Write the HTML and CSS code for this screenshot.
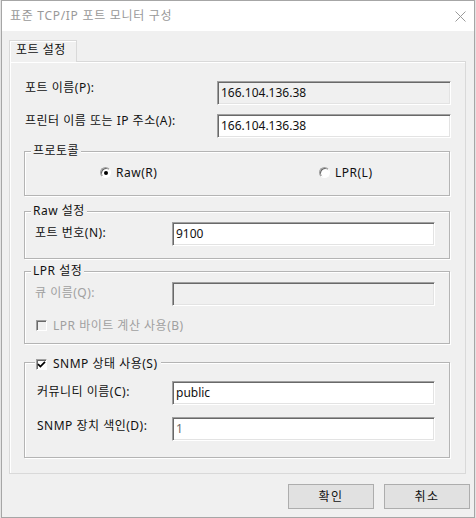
FILE: index.html
```html
<!DOCTYPE html>
<html lang="ko">
<head>
<meta charset="utf-8">
<title>표준 TCP/IP 포트 모니터 구성</title>
<link rel="stylesheet" href="styles.css">
</head>
<body>
<div class="window">
  <div class="titlebar">
    <span class="title">표준 TCP/IP 포트 모니터 구성</span>
    <svg class="close" width="11" height="11" viewBox="0 0 11 11"><path d="M0.5 0.5 L10.5 10.5 M10.5 0.5 L0.5 10.5" stroke="#9a9a9a" stroke-width="1" fill="none"/></svg>
  </div>
  <div class="body">
    <div class="tabs"><div class="tab">포트 설정</div></div>
    <div class="panel">
      <div class="row top">
        <span class="label">포트 이름(P):</span>
        <div class="input disabled wide">166.104.136.38</div>
      </div>
      <div class="row top r2">
        <span class="label">프린터 이름 또는 IP 주소(A):</span>
        <div class="input wide">166.104.136.38</div>
      </div>

      <div class="group g-proto">
        <span class="legend">프로토콜</span>
        <div class="radios">
          <span class="radio-item raw"><span class="radio checked"></span>Raw(R)</span>
          <span class="radio-item"><span class="radio"></span>LPR(L)</span>
        </div>
      </div>

      <div class="group g-raw">
        <span class="legend">Raw 설정</span>
        <div class="grow">
          <span class="glabel up3">포트 번호(N):</span>
          <div class="input">9100</div>
        </div>
      </div>

      <div class="group g-lpr">
        <span class="legend">LPR 설정</span>
        <div class="grow">
          <span class="glabel dim up3">큐 이름(Q):</span>
          <div class="input disabled"></div>
        </div>
        <div class="checkrow dim">
          <span class="check disabled"></span>LPR 바이트 계산 사용(B)
        </div>
      </div>

      <div class="group g-snmp">
        <span class="legend legend-check">
          <span class="check"><svg width="9" height="9" viewBox="0 0 9 9"><path d="M1 4.2 L3.4 6.6 L8 1.8" stroke="#000" stroke-width="1.7" fill="none"/></svg></span>SNMP 상태 사용(S)
        </span>
        <div class="grow g2">
          <span class="glabel up3">커뮤니티 이름(C):</span>
          <div class="input">public</div>
        </div>
        <div class="grow g2 r-gap">
          <span class="glabel up6">SNMP 장치 색인(D):</span>
          <div class="input grey">1</div>
        </div>
      </div>
    </div>
    <div class="buttons">
      <button class="btn">확인</button>
      <button class="btn">취소</button>
    </div>
  </div>
</div>
</body>
</html>
```
FILE: styles.css
```css
* { box-sizing: border-box; }
html, body { margin: 0; padding: 0; }
body {
  width: 476px;
  height: 518px;
  overflow: hidden;
  background: #e4e4e4;
  font: 12px/16px "Noto Sans", "Noto Sans CJK KR", sans-serif;
  letter-spacing: 0.5px;
  color: #111;
}
.window {
  margin-left: 1px;
  width: 474px;
  height: 518px;
  border: 1px solid #a6a6a6;
  background: #f0f0f0;
  display: flex;
  flex-direction: column;
}
.titlebar {
  height: 30px;
  background: #fff;
  display: flex;
  align-items: center;
  padding: 0 8px 0 8px;
}
.title { color: #999; font-size: 12px; letter-spacing: 0.7px; }
.close { margin-left: auto; }
.body {
  flex: 1;
  padding: 9px 4px 0 7px;
  display: flex;
  flex-direction: column;
}
.tabs { height: 21px; display: flex; }
.tab {
  position: relative;
  z-index: 1;
  width: 68px;
  height: 22px;
  border: 1px solid #d9d9d9;
  border-bottom: none;
  background: #f0f0f0;
  box-shadow: inset 1px 1px 0 #fff;
  padding: 1px 0 0 6px;
}
.panel {
  width: 457px;
  height: 413px;
  flex: none;
  border: 1px solid #d9d9d9;
  box-shadow: inset 1px 1px 0 #fff;
  padding: 19px 0 0 14px;
}
.row {
  display: flex;
  align-items: center;
  height: 24px;
  width: 427px;
  padding-left: 1px;
}
.row.top .label { margin-bottom: 10px; }
.r2 { margin-top: 9px; }
.input {
  height: 24px;
  width: 263px;
  flex: none;
  border: 1px solid;
  border-color: #a0a0a0 #fff #fff #a0a0a0;
  box-shadow: inset 1px 1px 0 #696969, inset -1px -1px 0 #e3e3e3;
  background: #fff;
  padding-left: 3px;
  line-height: 21px;
  letter-spacing: 0;
  white-space: nowrap;
}
.input.wide { width: 234px; margin-left: auto; }
.input.disabled { background: #f0f0f0; }
.input.grey { color: #6d6d6d; }

.group {
  position: relative;
  width: 426px;
  border: 1px solid #b4b4b4;
  box-shadow: inset 1px 1px 0 #fff, 1px 1px 0 #fff;
}
.legend {
  position: absolute;
  top: -9px;
  left: 6px;
  padding: 0 2px;
  background: #f0f0f0;
  line-height: 16px;
}
.g-proto { margin-top: 13px; height: 45px; padding-top: 14px; }
.radios { display: flex; align-items: center; height: 13px; padding-left: 75px; }
.radio-item { display: flex; align-items: center; }
.radio-item.raw { width: 219px; }
.radio {
  position: relative;
  width: 11px;
  height: 11px;
  border-radius: 50%;
  border: 1px solid;
  border-color: #a0a0a0 #fff #fff #a0a0a0;
  box-shadow: inset 1px 1px 0 #696969;
  background: #fff;
  margin-right: 5px;
}
.radio.checked::after {
  content: "";
  position: absolute;
  left: 3px;
  top: 3px;
  width: 4px;
  height: 4px;
  border-radius: 50%;
  background: #000;
}
.g-raw { margin-top: 15px; height: 48px; padding-top: 10px; }
.g-lpr { margin-top: 12px; height: 73px; padding-top: 10px; }
.g-snmp { margin-top: 18px; height: 96px; padding-top: 18px; }
.grow {
  display: flex;
  align-items: center;
  height: 24px;
  padding-left: 10px;
}
.grow.g2 { padding-left: 12px; }
.glabel { width: 137px; flex: none; }
.g2 .glabel { width: 135px; }
.up3 { margin-bottom: 3px; }
.up6 { margin-bottom: 6px; }
.r-gap { margin-top: 12px; }
.dim { color: #a0a0a0; }
.checkrow {
  display: flex;
  align-items: center;
  height: 13px;
  margin-top: 13px;
  padding-left: 11px;
}
.check {
  display: flex;
  align-items: center;
  justify-content: center;
  width: 11px;
  height: 11px;
  flex: none;
  border: 1px solid;
  border-color: #a0a0a0 #fff #fff #a0a0a0;
  box-shadow: inset 1px 1px 0 #696969;
  background: #fff;
  margin-right: 6px;
}
.check.disabled { background: #f0f0f0; }
.legend-check {
  display: flex;
  align-items: center;
  top: -7px;
  left: 10px;
  padding: 0 3px 0 1px;
}
.buttons {
  display: flex;
  justify-content: flex-end;
  gap: 10px;
  margin-top: 10px;
}
.btn {
  width: 86px;
  height: 25px;
  border: 1px solid #adadad;
  background: #e1e1e1;
  font: inherit;
  letter-spacing: 1.5px;
  color: #111;
  padding: 0;
}
```
